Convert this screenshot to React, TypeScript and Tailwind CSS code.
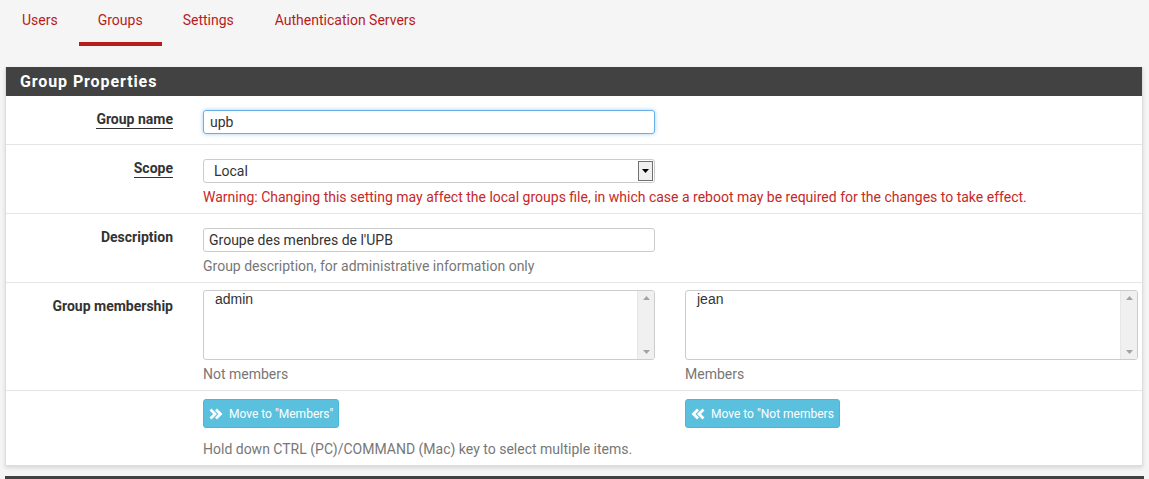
import React from "react";

const font = { fontFamily: "Roboto, 'Liberation Sans', sans-serif" };

function ListBox({ item }: { item: string }) {
  return (
    <div className="flex h-[70px] rounded-[3px] border border-[#cccccc] bg-white overflow-hidden">
      <div className="flex-1 pl-[11px] pt-[0px] leading-[16px] text-[#333333]" style={{ fontFamily: "'Liberation Sans', Arial, sans-serif", fontSize: 14 }}>
        {item}
      </div>
      <div className="w-[17px] bg-[#f0f0f0] border-l border-[#e6e6e6] flex flex-col items-center justify-between py-[5px]">
        <svg width="7" height="4" viewBox="0 0 7 4"><path d="M3.5 0 L7 4 L0 4 Z" fill="#a3a3a3" /></svg>
        <svg width="7" height="4" viewBox="0 0 7 4"><path d="M0 0 L7 0 L3.5 4 Z" fill="#a3a3a3" /></svg>
      </div>
    </div>
  );
}

function Row({
  label,
  underline,
  children,
  last,
  pad,
}: {
  label?: string;
  underline?: boolean;
  children: React.ReactNode;
  last?: boolean;
  pad: string;
}) {
  return (
    <div className={`flex ${last ? "" : "border-b border-[#e5e5e5]"}`}>
      <div className="w-[167px] shrink-0 text-right pt-[13px] text-[14px] leading-[20px] font-bold text-[#333333]">
        {label && (
          <span className={underline ? "border-b border-[#333333] pb-[1px]" : ""}>{label}</span>
        )}
      </div>
      <div className={`flex-1 pl-[30px] pr-[5px] ${pad}`}>{children}</div>
    </div>
  );
}

export default function App() {
  return (
    <div className="w-[1149px] h-[479px] bg-[#f5f5f5] overflow-hidden" style={font}>
      {/* Tabs */}
      <div className="flex h-[46px] pl-[5px] text-[14px] text-[#b71c1c]">
        <div className="px-[17px] pt-[10px]">Users</div>
        <div className="relative px-[19px] pt-[10px] ml-[4px]">
          Groups
          <div className="absolute left-0 right-0 bottom-[0px] h-[4px] bg-[#b71c1c]" />
        </div>
        <div className="px-[21px] pt-[10px]">Settings</div>
        <div className="px-[21px] pt-[10px] ml-[-1px]">Authentication Servers</div>
      </div>

      {/* Panel */}
      <div className="mt-[21px] mx-[5px] w-[1138px] bg-white border border-[#dddddd] border-t-0 shadow-[0_2px_4px_rgba(0,0,0,0.12)]">
        <div className="h-[29px] bg-[#424242] flex items-center pl-[14px] text-white text-[16px] font-bold tracking-[0.9px]">
          Group Properties
        </div>

        <Row label="Group name" underline pad="pt-[14px] pb-[10px]">
          <div className="w-[452px] h-[24px] rounded-[3px] border border-[#66afe9] shadow-[0_0_4px_rgba(102,175,233,0.6)] flex items-center pl-[6px] text-[14px] text-[#333333]">
            upb
          </div>
        </Row>

        <Row label="Scope" underline pad="pt-[14px] pb-[6px]">
          <div className="w-[452px] h-[24px] rounded-[3px] border border-[#cccccc] flex items-center">
            <div className="flex-1 pl-[10px] text-[14px] text-[#333333]">Local</div>
            <div className="w-[15px] h-[20px] mr-[1px] border border-[#707070] bg-[#f0f0f0] flex items-center justify-center">
              <svg width="7" height="4" viewBox="0 0 7 4"><path d="M0 0 L7 0 L3.5 4 Z" fill="#000" /></svg>
            </div>
          </div>
          <div className="mt-[4px] text-[14px] leading-[20px] text-[#c62828] whitespace-nowrap">
            Warning: Changing this setting may affect the local groups file, in which case a reboot may be required for the changes to take effect.
          </div>
        </Row>

        <Row label="Description" pad="pt-[14px] pb-[6px]">
          <div className="w-[452px] h-[24px] rounded-[3px] border border-[#cccccc] flex items-center pl-[5px] text-[14px] text-[#333333]">
            Groupe des menbres de l'UPB
          </div>
          <div className="mt-[4px] text-[14px] leading-[20px] text-[#777777]">
            Group description, for administrative information only
          </div>
        </Row>

        <Row label="Group membership" pad="pt-[7px] pb-[6px]">
          <div className="flex gap-[30px]">
            <div className="w-[452px]">
              <ListBox item="admin" />
              <div className="mt-[4px] text-[14px] leading-[20px] text-[#777777]">Not members</div>
            </div>
            <div className="w-[453px]">
              <ListBox item="jean" />
              <div className="mt-[4px] text-[14px] leading-[20px] text-[#777777]">Members</div>
            </div>
          </div>
        </Row>

        <Row last pad="pt-[8px] pb-[6px]">
          <div className="flex gap-[30px]">
            <div className="w-[452px]">
              <div className="inline-flex items-center gap-[6px] h-[29px] pl-[5px] pr-[5px] rounded-[3px] bg-[#5bc0de] border border-[#46b8da] text-white text-[12px]">
                <svg width="14" height="12" viewBox="0 0 14 12"><path d="M1.5 1.5 L6 6 L1.5 10.5 M7 1.5 L11.5 6 L7 10.5" stroke="white" strokeWidth="2.8" fill="none" /></svg>
                Move to "Members"
              </div>
            </div>
            <div className="w-[453px]">
              <div className="inline-flex items-center gap-[6px] h-[29px] pl-[5px] pr-[5px] rounded-[3px] bg-[#5bc0de] border border-[#46b8da] text-white text-[12px]">
                <svg width="14" height="12" viewBox="0 0 14 12"><path d="M12.5 1.5 L8 6 L12.5 10.5 M7 1.5 L2.5 6 L7 10.5" stroke="white" strokeWidth="2.8" fill="none" /></svg>
                Move to "Not members
              </div>
            </div>
          </div>
          <div className="mt-[11px] text-[14px] leading-[20px] text-[#777777]">
            Hold down CTRL (PC)/COMMAND (Mac) key to select multiple items.
          </div>
        </Row>
      </div>

      <div className="mt-[10px] mx-[5px] h-[10px] bg-[#424242]" />
    </div>
  );
}
